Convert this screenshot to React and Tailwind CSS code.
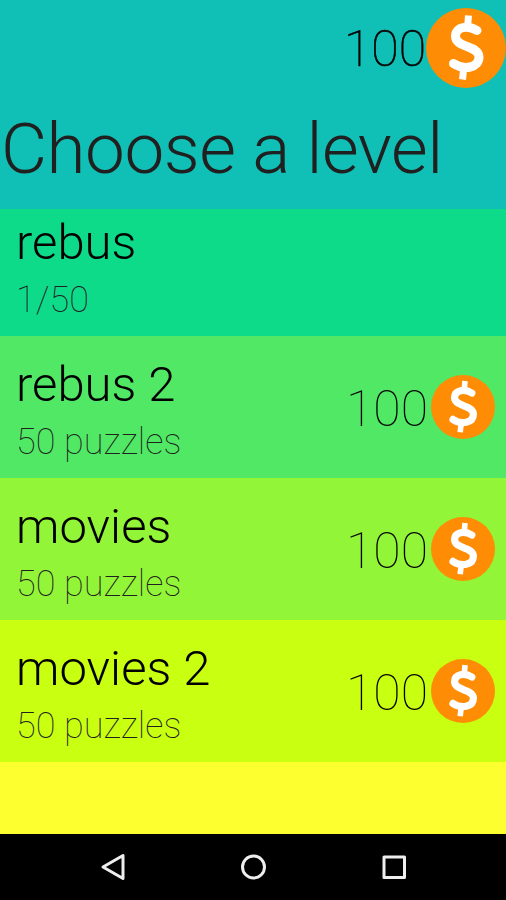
import React from 'react';

const levels = [
  { name: 'rebus', info: '1/50', price: null, row: 'h-[127px] bg-[#0edb8a]', pad: 'pt-[2px]' },
  { name: 'rebus 2', info: '50 puzzles', price: 100, row: 'h-[142px] bg-[#50e865]', pad: 'pt-[17px]' },
  { name: 'movies', info: '50 puzzles', price: 100, row: 'h-[142px] bg-[#93f537]', pad: 'pt-[17px]' },
  { name: 'movies 2', info: '50 puzzles', price: 100, row: 'h-[142px] bg-[#c9ff11]', pad: 'pt-[17px]' },
];

const Coin = ({ className }) => (
  <svg viewBox="0 0 80 80" className={className}>
    <circle cx="40" cy="40" r="40" fill="#ff8c05" />
    <g fill="none" stroke="#fff" strokeLinejoin="round">
      <path d="M42.500 7.500L41.500 20M38 58L36.500 71.500" strokeWidth="7" />
      <path d="M51 22.500C42 17 29.500 18.500 29.500 28.500C29.500 40 53 37 53 49C53 60 38 62.500 27.500 55.500" strokeWidth="9" strokeLinecap="round" />
    </g>
  </svg>
);

const App = () => {
  return (
    <div className="w-[506px] h-[900px] overflow-hidden flex flex-col bg-[#fdff2e] text-[#202020] font-['Roboto',sans-serif] font-light">
      <header className="h-[209px] shrink-0 bg-[#10bfb5]">
        <div className="h-[96px] flex items-center justify-end">
          <span className="pt-[2px] text-[50px] leading-none text-black font-thin [-webkit-text-stroke:0.6px_black]">100</span>
          <Coin className="w-[80px] h-[80px]" />
        </div>
        <h1 className="pl-[1px] pt-[13px] text-[71px] leading-[80px] tracking-[-0.5px] whitespace-nowrap">Choose a level</h1>
      </header>

      {levels.map((level) => (
        <div key={level.name} className={`${level.row} shrink-0 flex justify-between pl-4 pr-[11px]`}>
          <div className={level.pad}>
            <div className="text-[49px] leading-[64px] text-black">{level.name}</div>
            <div className="pt-px text-[36px] leading-[48px] font-thin">{level.info}</div>
          </div>
          {level.price && (
            <div className="flex items-center gap-[3px]">
              <span className="pt-[3px] text-[50px] leading-none font-thin text-black">{level.price}</span>
              <Coin className="w-16 h-16" />
            </div>
          )}
        </div>
      ))}

      {/* Navigation bar */}
      <nav className="mt-auto h-[66px] bg-black flex items-center justify-center">
        <svg viewBox="0 0 506 66" className="w-full h-full" fill="none" stroke="#eee" strokeWidth="3" strokeLinejoin="round">
          <path d="M123 21.500v23L103 33Z" />
          <circle cx="253.500" cy="33" r="11" />
          <path d="M384 23h20.500v20.500h-20.500Z" />
        </svg>
      </nav>
    </div>
  );
};

export default App;
